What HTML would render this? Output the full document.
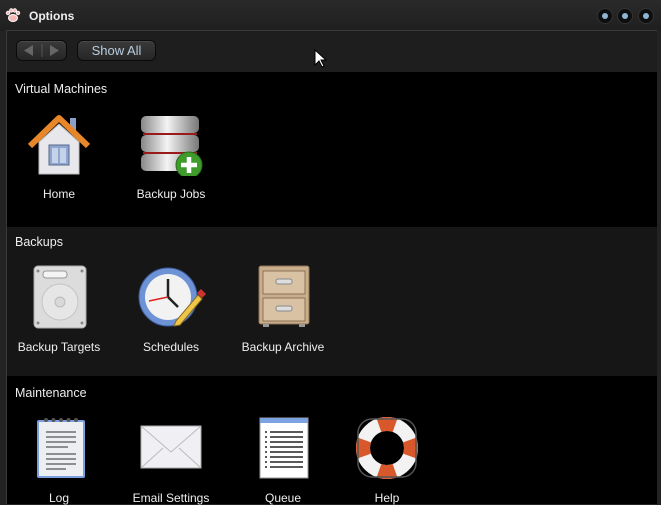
<!DOCTYPE html>
<html><head><meta charset="utf-8"><style>
*{margin:0;padding:0;box-sizing:border-box}
body{width:661px;height:504px;overflow:hidden;background:#232323;font-family:"Liberation Sans",sans-serif;position:relative;color:#fff}
.title{position:absolute;left:0;top:0;width:661px;height:31px;background:linear-gradient(#2a2a2a,#1f1f1f)}
.title .t{position:absolute;left:29px;top:9px;font-size:12px;font-weight:bold;color:#eee}
.dot{position:absolute;top:9px;width:14px;height:14px;border-radius:50%;background:#0e0e0e;box-shadow:0 0 0 1px #333}
.dot:after{content:"";position:absolute;left:4px;top:4px;width:6px;height:6px;border-radius:50%;background:#8fb4d4}
.frame{position:absolute;left:6px;top:30px;width:651px;height:474px;background:#000;border-left:1px solid #3a3a3a;border-top:1px solid #3a3a3a}
.tb{position:absolute;left:7px;top:31px;width:650px;height:41px;background:#1e1e1e}
.btn{position:absolute;top:40px;height:21px;border-radius:6px;background:linear-gradient(#3a3a3a,#262626);border:1px solid #0a0a0a;box-shadow:inset 0 1px 0 #4a4a4a;color:#b9cde0;font-size:13px;text-align:center;line-height:19px}
.sec{position:absolute;left:7px;width:650px}
.h{position:absolute;left:8px;font-size:12.5px;color:#eee}
.it{position:absolute;width:110px;text-align:center;font-size:12px;color:#eee}
.it svg{display:block;margin:0 auto}
.it span{display:block;margin-top:11px}
</style></head><body>
<div class="title">
<svg style="position:absolute;left:5px;top:7px" width="16" height="16" viewBox="0 0 16 16"><ellipse cx="8" cy="11" rx="4.5" ry="3.5" fill="#f4b8b8" stroke="#fff"/><circle cx="3" cy="6" r="1.8" fill="#f4b8b8" stroke="#fff" stroke-width=".8"/><circle cx="6.3" cy="3.5" r="1.8" fill="#f4b8b8" stroke="#fff" stroke-width=".8"/><circle cx="9.8" cy="3.5" r="1.8" fill="#f4b8b8" stroke="#fff" stroke-width=".8"/><circle cx="13" cy="6" r="1.8" fill="#f4b8b8" stroke="#fff" stroke-width=".8"/></svg>
<div class="t">Options</div>
<div class="dot" style="left:598px"></div><div class="dot" style="left:618px"></div><div class="dot" style="left:639px"></div>
</div>
<div class="frame"></div>
<div class="tb"></div>
<div class="btn" style="left:16px;width:51px"><svg width="50" height="19" viewBox="0 0 50 19"><path d="M16 4v11l-9-5.5z" fill="#666"/><path d="M33 4v11l9-5.5z" fill="#666"/><line x1="25" y1="3" x2="25" y2="16" stroke="#555"/></svg></div>
<div class="btn" style="left:77px;width:79px">Show All</div>
<svg style="position:absolute;left:314px;top:49px" width="13" height="20" viewBox="0 0 13 20"><path d="M1 1v15l4-4 3 6 2-1-3-6h5z" fill="#fff" stroke="#000"/></svg>

<div class="sec" style="top:72px;height:155px;background:#000">
<div class="h" style="top:10px">Virtual Machines</div>
<div class="it" style="left:-3px;top:40px"><svg width="64" height="64" viewBox="0 0 64 64"><rect x="43" y="6" width="6" height="14" fill="#8aa0c8"/><path d="M12 30L32 12 52 30V62H12z" fill="#e8e8ec" stroke="#bbb"/><path d="M3 34L32 6 61 34" fill="none" stroke="#e8872a" stroke-width="6" stroke-linejoin="round"/><rect x="22" y="33" width="20" height="20" fill="#8fa7cf" stroke="#56688a"/><rect x="25" y="36" width="6" height="15" fill="#c5d3ea"/><rect x="33" y="36" width="6" height="15" fill="#c5d3ea"/></svg><span>Home</span></div>
<div class="it" style="left:109px;top:40px"><svg width="72" height="64" viewBox="0 0 72 64"><defs><linearGradient id="m" x1="0" x2="1"><stop offset="0" stop-color="#888"/><stop offset=".45" stop-color="#f4f4f4"/><stop offset="1" stop-color="#777"/></linearGradient></defs><rect x="6" y="4" width="58" height="17" rx="5" fill="url(#m)"/><rect x="6" y="23" width="58" height="17" rx="5" fill="url(#m)"/><rect x="6" y="42" width="58" height="17" rx="5" fill="url(#m)"/><line x1="8" y1="22" x2="62" y2="22" stroke="#c22" stroke-width="1.5"/><line x1="8" y1="41" x2="62" y2="41" stroke="#c22" stroke-width="1.5"/><circle cx="54" cy="53" r="13" fill="#3f9b2c" stroke="#2a6e1d"/><path d="M54 45v16M46 53h16" stroke="#fff" stroke-width="4.5"/></svg><span>Backup Jobs</span></div>
</div>

<div class="sec" style="top:227px;height:149px;background:#161616">
<div class="h" style="top:8px">Backups</div>
<div class="it" style="left:-3px;top:38px"><svg width="64" height="64" viewBox="0 0 64 64"><rect x="7" y="1" width="52" height="62" rx="4" fill="#dcdcdc" stroke="#aaa"/><rect x="16" y="6" width="24" height="7" rx="3" fill="#f4f4f4" stroke="#999"/><circle cx="33" cy="37" r="18" fill="#e6e6e6" stroke="#c4c4c4"/><circle cx="33" cy="37" r="5" fill="#d8d8d8" stroke="#bbb"/><circle cx="11" cy="6" r="1.5" fill="#888"/><circle cx="55" cy="6" r="1.5" fill="#888"/><circle cx="11" cy="58" r="1.5" fill="#888"/><circle cx="55" cy="58" r="1.5" fill="#888"/></svg><span>Backup Targets</span></div>
<div class="it" style="left:109px;top:38px"><svg width="70" height="64" viewBox="0 0 70 64"><circle cx="32" cy="32" r="29" fill="#6d93d6" stroke="#3c5c9c"/><circle cx="32" cy="32" r="23" fill="#f2f2f2"/><path d="M32 32V14M32 32l10 10" stroke="#222" stroke-width="2.5"/><path d="M32 32L13 36" stroke="#d22" stroke-width="1.5"/><path d="M40 56L62 30 66 34 44 60 38 61z" fill="#f0c64a" stroke="#8a6d1a"/><path d="M61 28l4-4 5 5-4 4z" fill="#c33"/></svg><span>Schedules</span></div>
<div class="it" style="left:221px;top:38px"><svg width="64" height="64" viewBox="0 0 64 64"><rect x="8" y="1" width="50" height="58" rx="2" fill="#c9ae8c" stroke="#8c7355"/><rect x="12" y="6" width="42" height="23" fill="#d8c2a3" stroke="#8c7355"/><rect x="12" y="33" width="42" height="23" fill="#d8c2a3" stroke="#8c7355"/><rect x="25" y="14" width="16" height="5" rx="2" fill="#ddd" stroke="#888"/><rect x="25" y="41" width="16" height="5" rx="2" fill="#ddd" stroke="#888"/><rect x="12" y="59" width="6" height="3" fill="#999"/><rect x="48" y="59" width="6" height="3" fill="#999"/></svg><span>Backup Archive</span></div>
</div>

<div class="sec" style="top:376px;height:128px;background:#000">
<div class="h" style="top:10px">Maintenance</div>
<div class="it" style="left:-3px;top:40px"><svg width="64" height="64" viewBox="0 0 64 64"><rect x="10" y="4" width="48" height="58" rx="2" fill="#7b9ee0"/><rect x="12" y="6" width="44" height="54" fill="#eceef2"/><g stroke="#555" stroke-width="1.2"><path d="M19 16h30M19 21h30M19 26h30M19 31h22M19 38h30M19 43h30M19 48h30M19 53h20"/></g><g fill="#555"><circle cx="19" cy="4" r="2"/><circle cx="26.5" cy="4" r="2"/><circle cx="34" cy="4" r="2"/><circle cx="41.5" cy="4" r="2"/><circle cx="49" cy="4" r="2"/></g></svg><span>Log</span></div>
<div class="it" style="left:109px;top:40px"><svg width="64" height="64" viewBox="0 0 64 64"><rect x="2" y="10" width="60" height="42" fill="#f0f0f4" stroke="#aaa"/><path d="M2 10l30 26 30-26M2 52l22-20M62 52l-22-20" fill="none" stroke="#bbb"/></svg><span>Email Settings</span></div>
<div class="it" style="left:221px;top:40px"><svg width="64" height="64" viewBox="0 0 64 64"><rect x="9" y="2" width="48" height="60" fill="#fff" stroke="#999"/><rect x="9" y="2" width="48" height="5" fill="#7ea3e3"/><g stroke="#222" stroke-width="1.6"><path d="M14 16h2M19 16h33M14 21h2M19 21h33M14 26h2M19 26h33M14 31h2M19 31h33M14 36h2M19 36h33M14 41h2M19 41h33M14 46h2M19 46h33M14 51h2M19 51h33"/></g></svg><span>Queue</span></div>
<div class="it" style="left:325px;top:40px"><svg width="64" height="64" viewBox="0 0 64 64"><circle cx="32" cy="32" r="24" fill="none" stroke="#f2f2f2" stroke-width="14"/><g stroke="#d9582b" stroke-width="14" fill="none"><path d="M24 9.4A24 24 0 0 1 40 9.4"/><path d="M24 54.6A24 24 0 0 0 40 54.6"/><path d="M9.4 24A24 24 0 0 0 9.4 40"/><path d="M54.6 24A24 24 0 0 1 54.6 40"/></g><rect x="3" y="3" width="58" height="58" rx="14" fill="none" stroke="#555" stroke-width="1.5"/></svg><span>Help</span></div>
</div>
</body></html>
